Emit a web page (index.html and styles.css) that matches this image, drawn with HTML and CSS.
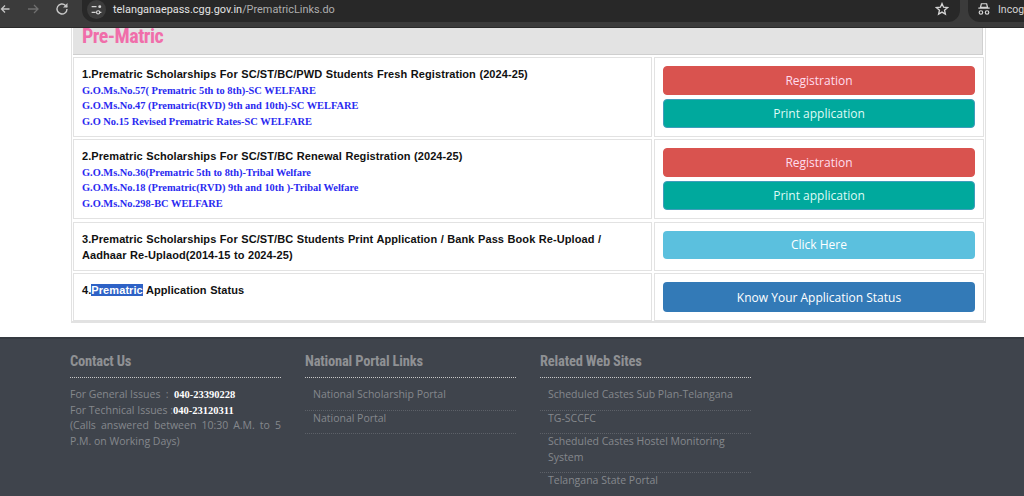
FILE: index.html
```html
<!DOCTYPE html>
<html lang="en">
<head>
<meta charset="utf-8">
<title>Prematric Links</title>
<link rel="stylesheet" href="styles.css">
</head>
<body>
<header class="chrome">
  <div class="toolbar">
    <svg class="nav back" viewBox="0 0 16 16" width="16" height="16"><path d="M11.500 8H3.500M7 4.500 3.500 8 7 11.500" fill="none" stroke="#c4c4c4" stroke-width="1.300"/></svg>
    <svg class="nav fwd" viewBox="0 0 16 16" width="16" height="16"><path d="M3 8h10M9 4l4 4-4 4" fill="none" stroke="#6f6f6f" stroke-width="1.300"/></svg>
    <svg class="nav reload" viewBox="0 0 16 16" width="16" height="16"><path d="M13 8a5 5 0 1 1-1.500-3.600L13 6" fill="none" stroke="#c7c7c7" stroke-width="1.400"/><path d="M13.500 2v4.500H9z" fill="#c7c7c7"/></svg>
    <div class="omnibox">
      <span class="site-icon"><svg viewBox="0 0 16 16" width="13" height="13"><path d="M2 4.500h6M12 11.500h2M2 11.500h5" stroke="#d5d5d5" stroke-width="1.500" fill="none"/><circle cx="12" cy="4.500" r="1.800" fill="#d5d5d5"/><circle cx="10" cy="11.500" r="2" fill="none" stroke="#d5d5d5" stroke-width="1.400"/></svg></span>
      <span class="url"><span class="host">telanganaepass.cgg.gov.in</span>/PrematricLinks.do</span>
      <svg class="star" viewBox="0 0 16 16" width="14" height="14"><path d="M8 1.800 9.800 6l4.500.4-3.400 3 1 4.400L8 11.500l-3.900 2.300 1-4.400-3.400-3L6.200 6z" fill="none" stroke="#d5d5d5" stroke-width="1.500"/></svg>
    </div>
    <div class="incognito">
      <svg class="incognito-icon" viewBox="0 0 16 16" width="14" height="14"><path d="M5 2h6l1 4H4zM1.500 7h13" stroke="#d5d5d5" stroke-width="1.400" fill="none"/><circle cx="4.500" cy="12" r="2" fill="none" stroke="#d5d5d5" stroke-width="1.400"/><circle cx="11.500" cy="12" r="2" fill="none" stroke="#d5d5d5" stroke-width="1.400"/></svg>
      <span class="incognito-label">Incognito</span>
    </div>
  </div>
</header>

<main class="panel">
  <h2 class="title-band">Pre-Matric</h2>
  <div class="rows">
    <div class="row row-tall">
      <div class="cell info">
        <p class="item">1.Prematric Scholarships For SC/ST/BC/PWD Students Fresh Registration (2024-25)</p>
        <a class="go" href="#">G.O.Ms.No.57( Prematric 5th to 8th)-SC WELFARE</a>
        <a class="go" href="#">G.O.Ms.No.47 (Prematric(RVD) 9th and 10th)-SC WELFARE</a>
        <a class="go" href="#">G.O No.15 Revised Prematric Rates-SC WELFARE</a>
      </div>
      <div class="cell actions">
        <a class="btn red" href="#">Registration</a>
        <a class="btn teal" href="#">Print application</a>
      </div>
    </div>
    <div class="row row-tall">
      <div class="cell info">
        <p class="item">2.Prematric Scholarships For SC/ST/BC Renewal Registration (2024-25)</p>
        <a class="go" href="#">G.O.Ms.No.36(Prematric 5th to 8th)-Tribal Welfare</a>
        <a class="go" href="#">G.O.Ms.No.18 (Prematric(RVD) 9th and 10th )-Tribal Welfare</a>
        <a class="go" href="#">G.O.Ms.No.298-BC WELFARE</a>
      </div>
      <div class="cell actions">
        <a class="btn red" href="#">Registration</a>
        <a class="btn teal" href="#">Print application</a>
      </div>
    </div>
    <div class="row row-three">
      <div class="cell info">
        <p class="item wrap">3.Prematric Scholarships For SC/ST/BC Students Print Application / Bank Pass Book Re-Upload / Aadhaar Re-Uplaod(2014-15 to 2024-25)</p>
      </div>
      <div class="cell actions">
        <a class="btn sky" href="#">Click Here</a>
      </div>
    </div>
    <div class="row row-four">
      <div class="cell info">
        <p class="item">4.<mark class="selected">Prematric</mark> Application Status</p>
      </div>
      <div class="cell actions">
        <a class="btn blue" href="#">Know Your Application Status</a>
      </div>
    </div>
  </div>
</main>

<footer class="footer">
  <section class="col">
    <h3 class="col-title">Contact Us</h3>
    <div class="contact">
      <div>For General Issues &nbsp;:&nbsp; <b class="phone">040-23390228</b></div>
      <div>For Technical Issues :<b class="phone">040-23120311</b></div>
      <p class="hours">(Calls answered between 10:30 A.M. to 5 P.M. on Working Days)</p>
    </div>
  </section>
  <section class="col">
    <h3 class="col-title">National Portal Links</h3>
    <ul class="links">
      <li>National Scholarship Portal</li>
      <li>National Portal</li>
    </ul>
  </section>
  <section class="col">
    <h3 class="col-title">Related Web Sites</h3>
    <ul class="links">
      <li>Scheduled Castes Sub Plan-Telangana</li>
      <li>TG-SCCFC</li>
      <li>Scheduled Castes Hostel Monitoring System</li>
      <li>Telangana State Portal</li>
    </ul>
  </section>
</footer>
</body>
</html>
```
FILE: styles.css
```css
* { box-sizing: border-box; }
html, body { margin: 0; padding: 0; }
body {
  width: 1024px;
  height: 496px;
  overflow: hidden;
  background: #fff;
  font-family: "Open Sans", "Liberation Sans", sans-serif;
}
.chrome {
  height: 28px;
  background: #3b3b3b;
  border-bottom: 1px solid #2a2a2a;
}
.toolbar {
  height: 22px;
  display: flex;
  align-items: flex-start;
  color: #d5d5d5;
}
.nav { flex: none; margin-top: 1px; }
.back { margin-left: -2px; }
.fwd { margin-left: 11px; }
.reload { margin-left: 13px; }
.omnibox {
  flex: none;
  margin-left: 12px;
  width: 878px;
  height: 22px;
  background: #282828;
  border-radius: 0 0 12px 12px;
  display: flex;
  align-items: center;
  padding: 0 11px 4px 5px;
  font-size: 11px;
}
.site-icon {
  width: 19px;
  height: 19px;
  border-radius: 50%;
  background: #3c3c3c;
  display: flex;
  align-items: center;
  justify-content: center;
}
.url { margin-left: 7px; color: #aeaeae; flex: 1; font-family: "Roboto", sans-serif; font-size: 10.900px; }
.host { color: #e3e3e3; }
.incognito {
  margin-left: 8px;
  height: 22px;
  padding: 0 0 4px 9px;
  flex: 1;
  min-width: 0;
  background: #282828;
  border-radius: 0 0 0 12px;
  display: flex;
  align-items: center;
  gap: 7px;
  overflow: hidden;
  font-size: 10.500px;
  white-space: nowrap;
  font-family: "Roboto", sans-serif;
}
.incognito-icon, .incognito-label { flex: none; }

.panel {
  width: 915px;
  height: 295px;
  margin: 0 0 0 71px;
  border: 1px solid #e2e2e2;
  border-top: 0;
  border-bottom-width: 2px;
  padding: 0 2px 0 1px;
}
.title-band {
  margin: 0;
  height: 27px;
  background: #e3e3e3;
  border-bottom: 1px solid #cfcfcf;
  border-right: 1px solid #d0d0d0;
  padding-left: 9px;
  color: #f06eaa;
  font: 700 20px/17px "Roboto", sans-serif;
  font-stretch: condensed;
  letter-spacing: -0.500px;
}
.rows { display: flex; flex-direction: column; gap: 2px; padding-top: 2px; }
.row { display: grid; grid-template-columns: 579px 330px; gap: 2px; }
.row-tall { height: 80px; }
.row-three { height: 49px; margin-top: 1px; }
.row-four { height: 48px; }
.cell { border: 1px solid #e2e2e2; background: #fff; }
.info { padding: 8px 8px 0 8px; }
.item {
  margin: 0 0 0.500px;
  color: #111;
  font: 700 11px/16px "Liberation Sans", Arial, sans-serif;
  letter-spacing: 0.080px;
  word-spacing: 0.350px;
}
.wrap { width: 545px; }
.go {
  display: block;
  color: #2a2af0;
  text-decoration: none;
  font: 700 10.400px/15.700px "Liberation Serif", "Times New Roman", serif;
}
.selected { background: #2e62c6; color: #fff; }
.actions {
  padding: 8px 8px 0 8px;
  display: flex;
  flex-direction: column;
  gap: 4px;
}
.row-three .actions { padding-top: 7.500px; }
.btn {
  display: flex;
  align-items: center;
  justify-content: center;
  height: 29px;
  border-radius: 4px;
  color: #fff;
  text-decoration: none;
  font-size: 12px;
}
.red { background: #d9534f; border: 1px solid #d9534f; color: #fde; }
.teal { background: #00a99d; border: 1px solid #3f9dbb; color: #dffbf6; }
.sky { background: #5bc0de; height: 28px; }
.blue { background: #337ab7; height: 30px; }

.footer {
  height: 159px;
  margin-top: 14px;
  background: #3f444c;
  border-top: 2px solid #353a41;
  display: flex;
  padding: 14px 0 0 70px;
  gap: 24px;
}
.col { width: 211px; flex: none; }
.col-title {
  margin: 0;
  height: 25px;
  border-bottom: 1px dotted #c9c9c9;
  color: #8f9194;
  font: 700 14.500px/17px "Roboto", sans-serif;
  font-stretch: condensed;
  letter-spacing: -0.200px;
}
.contact {
  padding-top: 8px;
  color: #85888c;
  font-size: 10.500px;
  line-height: 16px;
}
.phone {
  color: #fff;
  font: 700 10.500px/1 "Liberation Serif", serif;
}
.hours { margin: 0; text-align: justify; line-height: 15.500px; }
.links { list-style: none; margin: 0; padding: 9px 0 0; color: #85888c; font-size: 10.500px; line-height: 15.500px; }
.links li { padding: 0 8px 7px 8px; border-bottom: 1px dotted #5d6168; }
```
